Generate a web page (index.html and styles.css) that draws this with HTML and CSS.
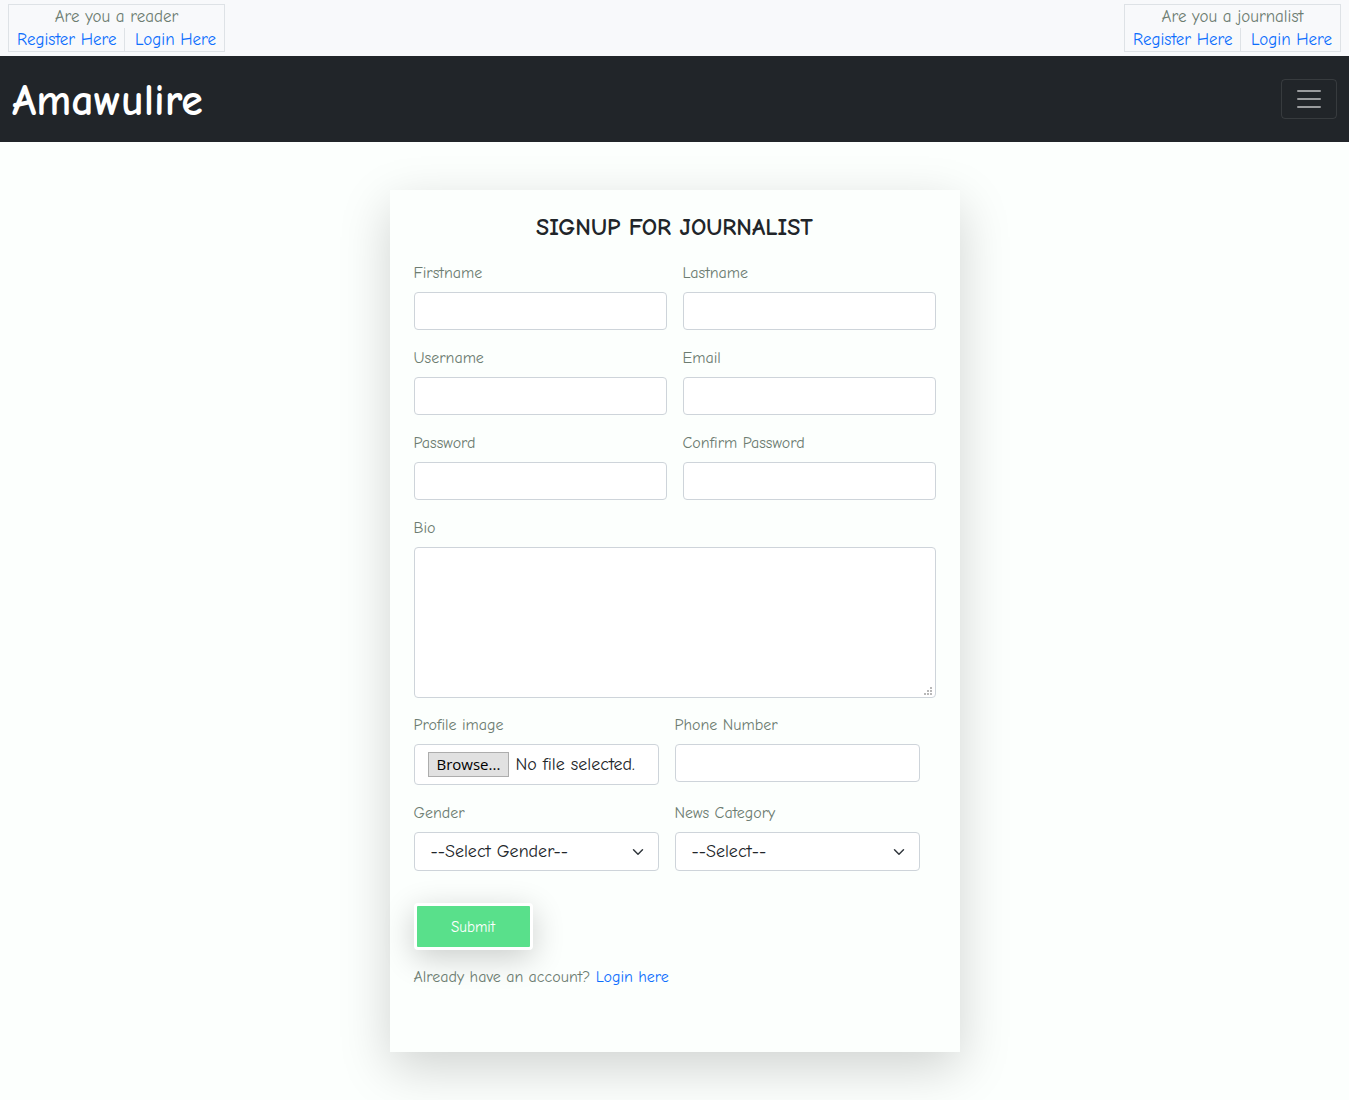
FILE: index.html
```html
<!DOCTYPE html>
<html lang="en">
<head>
<meta charset="utf-8">
<meta name="viewport" content="width=device-width, initial-scale=1">
<title>Amawulire</title>
<link rel="stylesheet" href="styles.css">
</head>
<body>
<div class="topbar">
  <div class="account-box">
    <p class="account-title">Are you a reader</p>
    <div class="account-links"><a class="first" href="#">Register Here</a><a href="#">Login Here</a></div>
  </div>
  <div class="account-box">
    <p class="account-title">Are you a journalist</p>
    <div class="account-links"><a class="first" href="#">Register Here</a><a href="#">Login Here</a></div>
  </div>
</div>
<header class="navbar">
  <a class="brand" href="#">Amawulire</a>
  <button class="menu-button" type="button" aria-label="Toggle navigation">
    <svg width="30" height="30" viewBox="0 0 30 30" aria-hidden="true"><path d="M4 7h22M4 15h22M4 23h22" stroke="#ffffff" stroke-opacity=".55" stroke-width="2" stroke-linecap="round"/></svg>
  </button>
</header>
<main class="page">
  <form class="card">
    <h1 class="card-title">SIGNUP FOR JOURNALIST</h1>
    <div class="grid">
      <div class="field"><label class="label" for="firstname">Firstname</label><input class="control" id="firstname" type="text"></div>
      <div class="field"><label class="label" for="lastname">Lastname</label><input class="control" id="lastname" type="text"></div>
      <div class="field"><label class="label" for="username">Username</label><input class="control" id="username" type="text"></div>
      <div class="field"><label class="label" for="email">Email</label><input class="control" id="email" type="email"></div>
      <div class="field"><label class="label" for="password">Password</label><input class="control" id="password" type="password"></div>
      <div class="field"><label class="label" for="confirm">Confirm Password</label><input class="control" id="confirm" type="password"></div>
      <div class="field wide"><label class="label" for="bio">Bio</label><textarea class="control bio" id="bio"></textarea></div>
    </div>
    <div class="grid details">
      <div class="field">
        <label class="label" for="photo">Profile image</label>
        <input class="file-input" id="photo" type="file">
        <label class="control file-control" for="photo"><span class="browse">Browse...</span><span>No file selected.</span></label>
      </div>
      <div class="field"><label class="label" for="phone">Phone Number</label><input class="control" id="phone" type="tel"></div>
      <div class="field"><label class="label" for="gender">Gender</label><select class="control select" id="gender"><option>--Select Gender--</option></select></div>
      <div class="field"><label class="label" for="category">News Category</label><select class="control select" id="category"><option>--Select--</option></select></div>
    </div>
    <button class="submit" type="submit">Submit</button>
    <p class="login-note">Already have an account? <a href="#">Login here</a></p>
  </form>
</main>
</body>
</html>
```
FILE: styles.css
```css
*, *::before, *::after { box-sizing: border-box; }

body {
  margin: 0;
  background: #fcfffd;
  color: #6c7c71;
  font-family: "Comic Neue", "Open Sans", sans-serif;
  font-size: 16px;
  line-height: 23px;
}

p, h1 { margin: 0; }
a { color: #0d6efd; text-decoration: none; }

.topbar {
  display: flex;
  justify-content: space-between;
  padding: 4px 8px;
  background: #f8f9fb;
}

.account-box {
  width: 217px;
  border: 1px solid #dee2e6;
  font-size: 17px;
  text-align: center;
}

.account-links {
  display: flex;
  justify-content: space-between;
  padding: 0 8px;
  white-space: nowrap;
}

.account-links .first {
  padding-right: 8px;
  border-right: 1px solid #dee2e6;
}

.navbar {
  display: flex;
  align-items: center;
  justify-content: space-between;
  padding: 13px 12px;
  background: #212529;
}

.brand {
  padding-top: 4px;
  color: #fff;
  font-size: 44px;
  font-weight: 700;
  line-height: 56px;
}

.menu-button {
  display: flex;
  justify-content: center;
  align-items: center;
  width: 56px;
  height: 40px;
  padding: 0;
  background: transparent;
  border: 1px solid rgba(255, 255, 255, .1);
  border-radius: 4px;
}

.page { padding: 48px 16px; }

.card {
  max-width: 570px;
  margin: 0 auto;
  padding: 24px 24px 63px;
  background: #fcfffd;
  box-shadow: 0 16px 48px rgba(0, 0, 0, .175);
}

.card-title {
  margin-bottom: 20px;
  color: #212529;
  font-size: 24px;
  font-weight: 700;
  line-height: 27px;
  text-align: center;
}

.grid {
  display: grid;
  grid-template-columns: 1fr 1fr;
  gap: 16px;
  margin-bottom: 15px;
}

.details { padding-right: 16px; margin-bottom: 32px; }
.wide { grid-column: 1 / -1; }

.field {
  display: flex;
  flex-direction: column;
  gap: 6px;
  position: relative;
}

.label { line-height: 25px; }

.control {
  width: 100%;
  height: 38px;
  padding: 6px 12px;
  border: 1px solid #ced4da;
  border-radius: 4px;
  background: #fff;
  color: #212529;
  font-family: inherit;
  font-size: 18px;
  line-height: 24px;
}

.bio { height: 151px; resize: vertical; }

.bio::-webkit-resizer {
  background: url("data:image/svg+xml,%3Csvg xmlns='http://www.w3.org/2000/svg' width='12' height='12'%3E%3Cpath fill='%23b8b8b8' d='M7 2h2v2h-2zM4 5h2v2h-2zM7 5h2v2h-2zM1 8h2v2h-2zM4 8h2v2h-2zM7 8h2v2h-2z'/%3E%3C/svg%3E") no-repeat right bottom;
}

.file-input {
  position: absolute;
  width: 1px;
  height: 1px;
  opacity: 0;
}

.file-control {
  display: flex;
  align-items: center;
  gap: 6px;
  height: 41px;
  padding: 0 13px;
  white-space: nowrap;
}

.browse {
  padding: 0 8px;
  border: 1px solid #adadad;
  background: #e1e1e1;
  color: #000;
  font-family: "Open Sans", sans-serif;
  font-size: 15px;
  line-height: 23px;
}

.select {
  height: 39px;
  padding: 6px 36px 6px 16px;
  appearance: none;
  background: #fff url("data:image/svg+xml,%3Csvg xmlns='http://www.w3.org/2000/svg' viewBox='0 0 16 16'%3E%3Cpath fill='none' stroke='%23343a40' stroke-linecap='round' stroke-linejoin='round' stroke-width='2' d='M2 5l6 6 6-6'/%3E%3C/svg%3E") no-repeat right 14px center / 12px 12px;
}

.submit {
  display: block;
  width: 119px;
  height: 47px;
  margin-bottom: 16px;
  border: 3px solid #fff;
  border-radius: 4px;
  background: #59e08b;
  box-shadow: 0 8px 32px rgba(0, 0, 0, .2);
  color: #fff;
  font-family: inherit;
  font-size: 15px;
}
```
